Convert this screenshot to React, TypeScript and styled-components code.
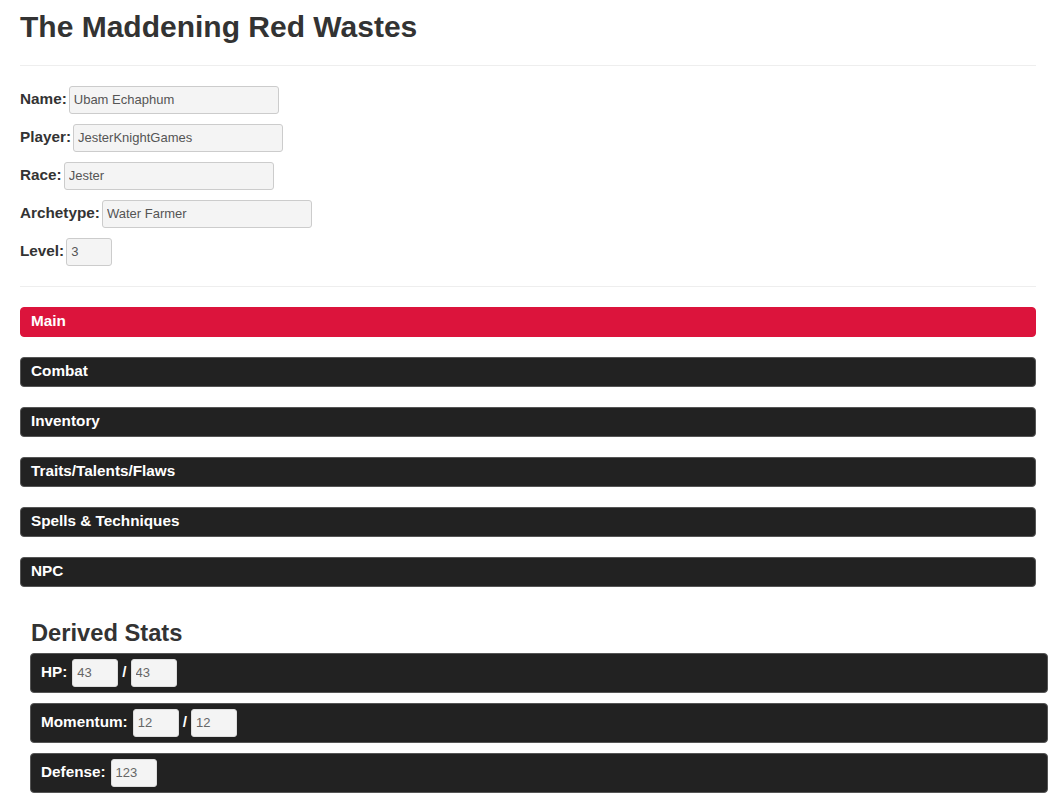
import React from "react";
import styled, { createGlobalStyle } from "styled-components";

const GlobalStyle = createGlobalStyle`
  html, body {
    margin: 0;
    padding: 0;
    background: #fff;
  }
  body {
    font-family: "Liberation Sans", Arial, Helvetica, sans-serif;
    color: #333;
  }
  * { box-sizing: border-box; }
`;

const Page = styled.div`
  padding: 0 25px 20px 20px;
`;

const Title = styled.h1`
  margin: 10px 0 22px 0;
  font-size: 30px;
  line-height: 33px;
  font-weight: bold;
  color: #333;
`;

const Rule = styled.hr`
  margin: 0 0 20px 0;
  border: 0;
  border-top: 1px solid #eee;
  height: 0;
`;

const Form = styled.div`
  display: flex;
  flex-direction: column;
  gap: 10px;
  margin-bottom: 20px;
`;

const FieldRow = styled.div`
  display: flex;
  align-items: center;
  height: 28px;
`;

const FieldLabel = styled.label`
  font-size: 15.3px;
  font-weight: bold;
  color: #333;
  margin-right: 2px;
  padding-bottom: 2px;
`;

const TextInput = styled.input<{ $w: number }>`
  width: ${(p) => p.$w}px;
  height: 28px;
  padding: 0 4px 1px 4px;
  border: 1px solid #ccc;
  border-radius: 3px;
  background: #f4f4f4;
  font-family: "Liberation Sans", Arial, sans-serif;
  font-size: 13px;
  color: #555;
  outline: none;
`;

const Tabs = styled.div`
  display: flex;
  flex-direction: column;
  gap: 20px;
`;

const Tab = styled.div<{ $active?: boolean }>`
  height: 30px;
  display: flex;
  align-items: center;
  padding: 0 10px 3px 10px;
  border-radius: 4px;
  background: ${(p) => (p.$active ? "#dc143c" : "#222")};
  border: 1px solid ${(p) => (p.$active ? "#dc143c" : "#555")};
  color: #fff;
  font-size: 15.3px;
  font-weight: bold;
`;

const StatsSection = styled.div`
  margin: 33px -12px 0 10px;
`;

const StatsHeading = styled.h3`
  margin: 0 0 7px 1px;
  font-size: 23.7px;
  line-height: 26px;
  font-weight: bold;
  color: #333;
`;

const StatList = styled.div`
  display: flex;
  flex-direction: column;
  gap: 10px;
`;

const StatRow = styled.div`
  height: 40px;
  display: flex;
  align-items: center;
  gap: 5px;
  padding: 0 10px;
  background: #222;
  border: 1px solid #555;
  border-radius: 4px;
  color: #fff;
  font-size: 15.3px;
  font-weight: bold;
`;

const StatText = styled.span`
  padding-bottom: 3px;
`;

const Slash = styled.span`
  padding-bottom: 3px;
  margin: 0 -1px 0 -1px;
`;

const StatInput = styled.input`
  width: 46px;
  height: 28px;
  padding: 0 4px 1px 4px;
  border: 1px solid #ddd;
  border-radius: 3px;
  background: #f4f4f4;
  font-family: "Liberation Sans", Arial, sans-serif;
  font-size: 13px;
  color: #666;
  outline: none;
`;

const fields = [
  { label: "Name:", value: "Ubam Echaphum", w: 210 },
  { label: "Player:", value: "JesterKnightGames", w: 210 },
  { label: "Race:", value: "Jester", w: 210 },
  { label: "Archetype:", value: "Water Farmer", w: 210 },
  { label: "Level:", value: "3", w: 46 },
];

const tabs = ["Main", "Combat", "Inventory", "Traits/Talents/Flaws", "Spells & Techniques", "NPC"];

export default function App() {
  return (
    <>
      <GlobalStyle />
      <Page>
        <Title>The Maddening Red Wastes</Title>
        <Rule />
        <Form>
          {fields.map((f) => (
            <FieldRow key={f.label}>
              <FieldLabel>{f.label}</FieldLabel>
              <TextInput $w={f.w} defaultValue={f.value} />
            </FieldRow>
          ))}
        </Form>
        <Rule />
        <Tabs>
          {tabs.map((t, i) => (
            <Tab key={t} $active={i === 0}>
              {t}
            </Tab>
          ))}
        </Tabs>
        <StatsSection>
          <StatsHeading>Derived Stats</StatsHeading>
          <StatList>
            <StatRow>
              <StatText>HP:</StatText>
              <StatInput defaultValue="43" />
              <Slash>/</Slash>
              <StatInput defaultValue="43" />
            </StatRow>
            <StatRow>
              <StatText>Momentum:</StatText>
              <StatInput defaultValue="12" />
              <Slash>/</Slash>
              <StatInput defaultValue="12" />
            </StatRow>
            <StatRow>
              <StatText>Defense:</StatText>
              <StatInput defaultValue="123" />
            </StatRow>
          </StatList>
        </StatsSection>
      </Page>
    </>
  );
}
